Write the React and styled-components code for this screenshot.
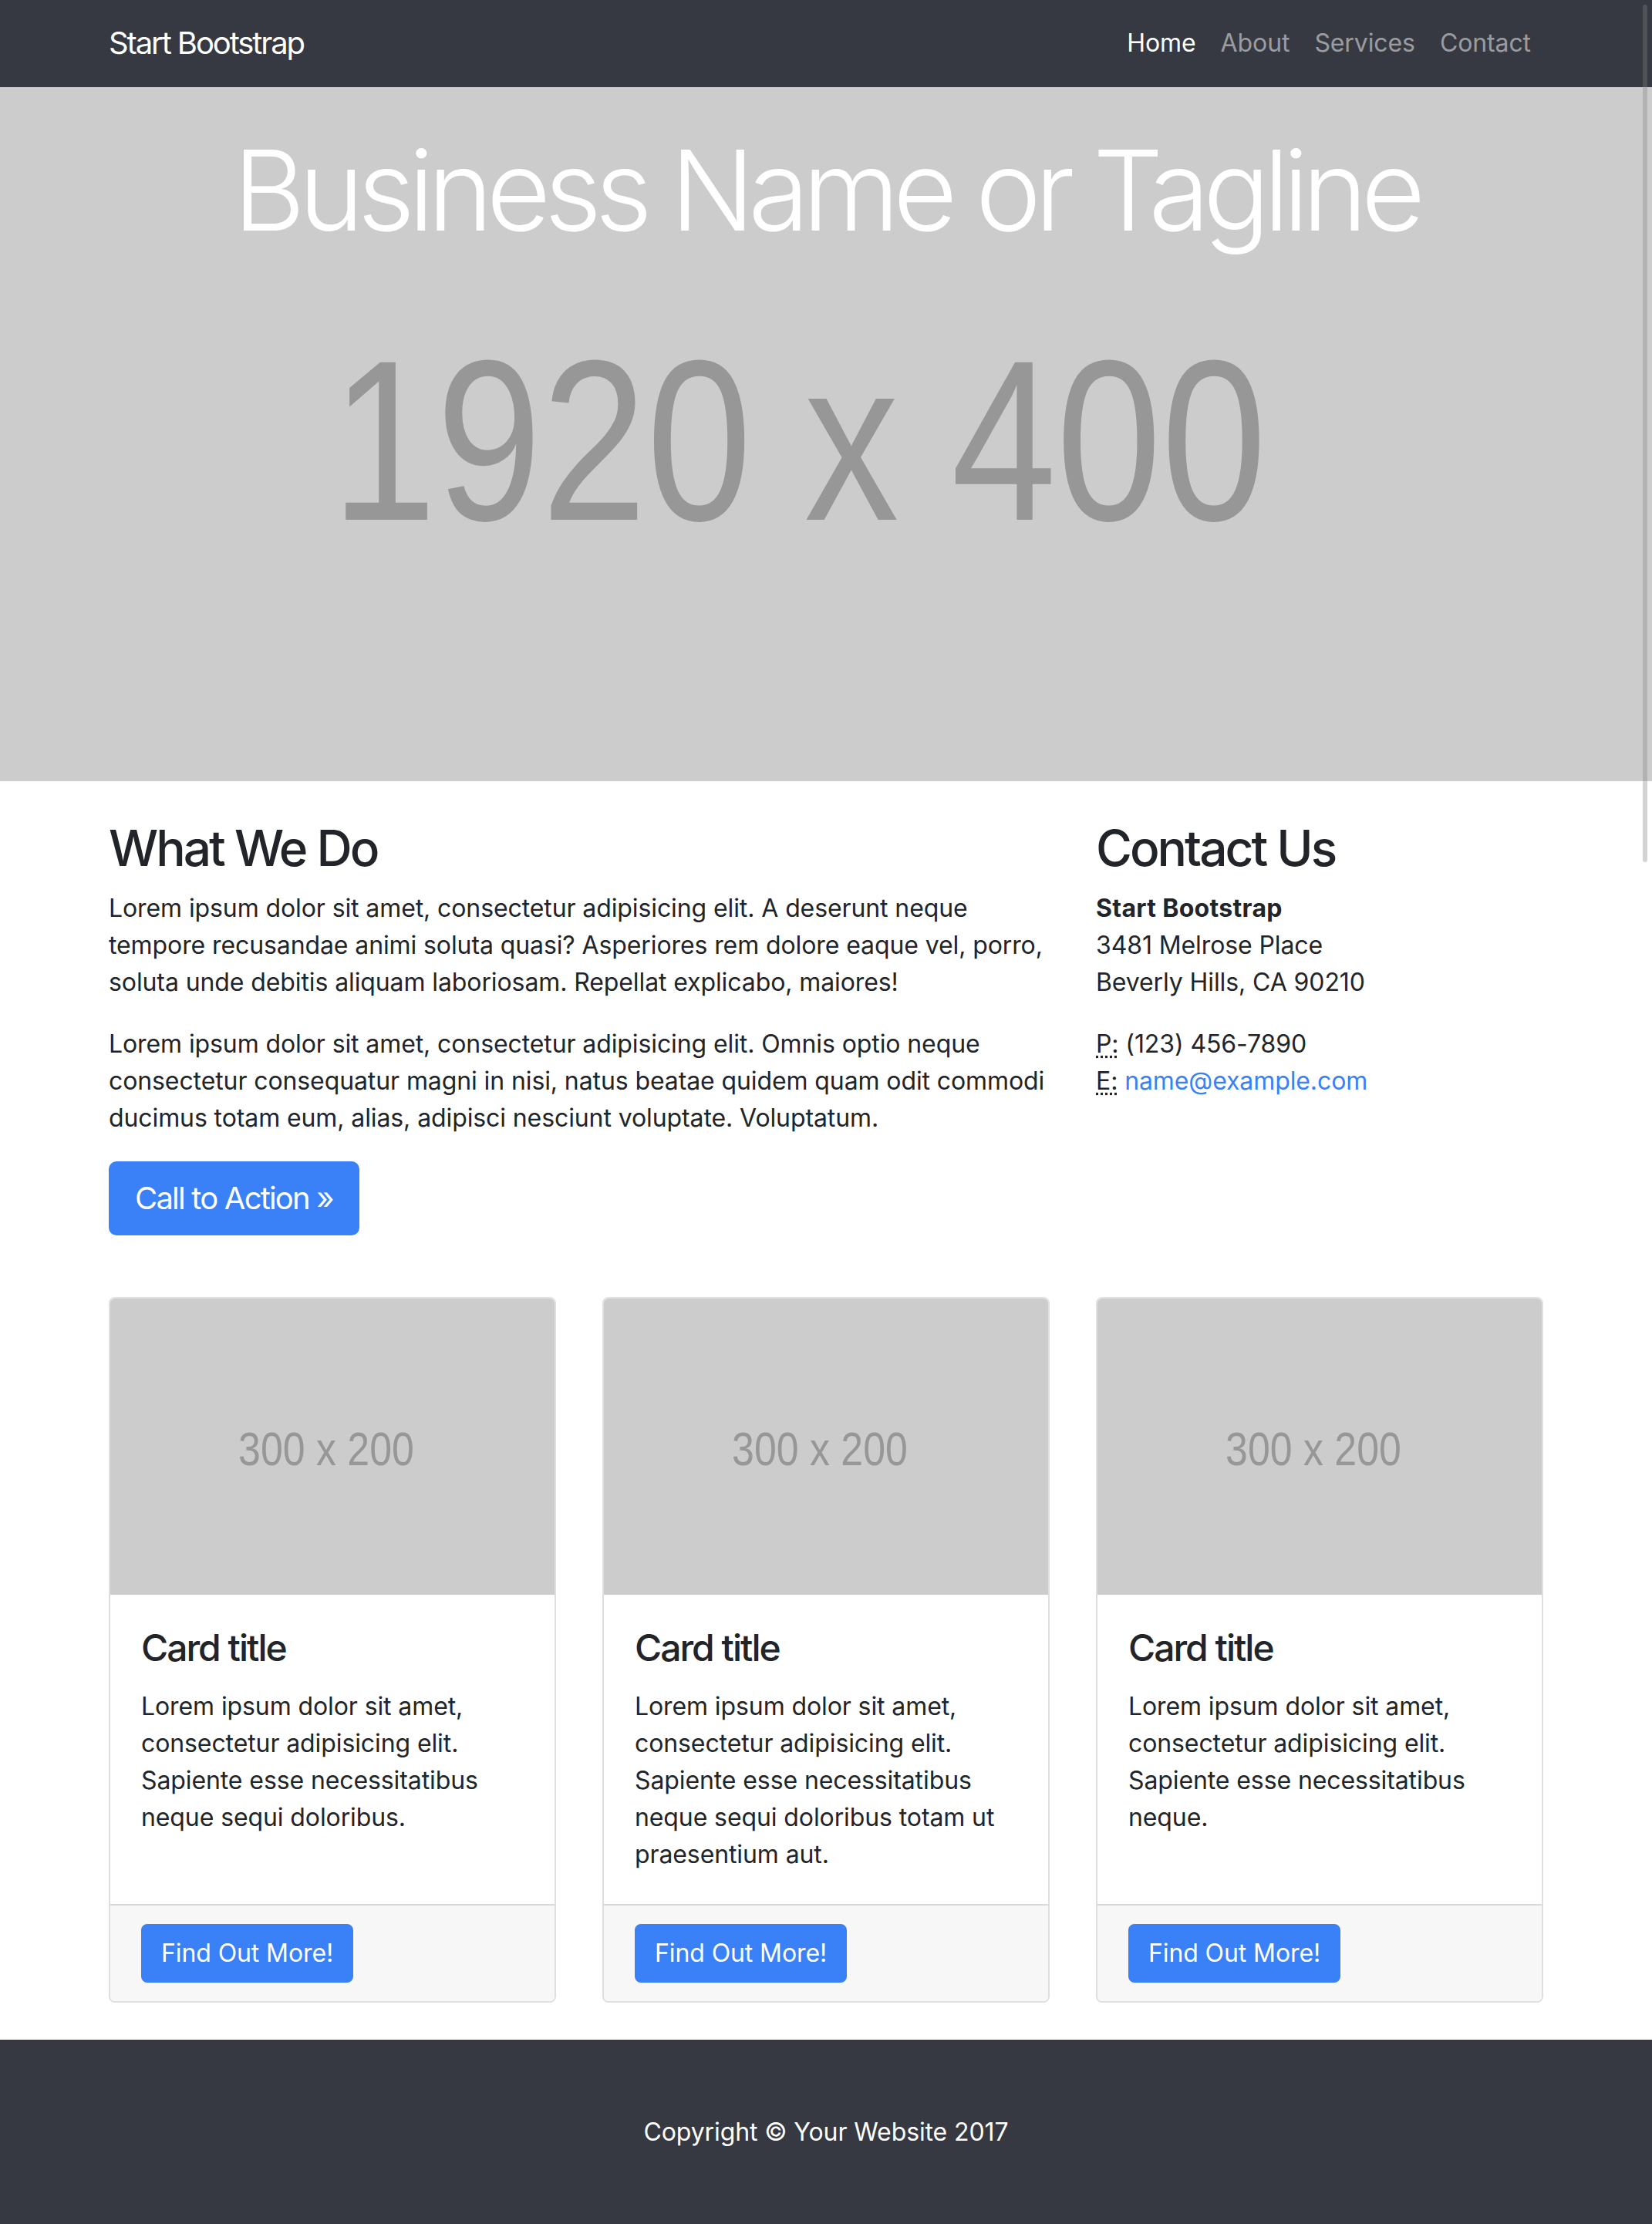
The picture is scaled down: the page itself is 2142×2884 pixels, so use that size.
import React from 'react'
import styled, { createGlobalStyle } from 'styled-components'

const GlobalStyle = createGlobalStyle`
  html, body {
    margin: 0;
    padding: 0;
    overflow: hidden;
  }
  body {
    font-family: Inter, "Noto Sans", "Liberation Sans", sans-serif;
    font-size: 32px;
    line-height: 1.5;
    letter-spacing: -0.1px;
    color: #212529;
    background: #fff;
    -webkit-font-smoothing: antialiased;
  }
  * {
    box-sizing: border-box;
  }
`

const Container = styled.div`
  width: 1920px;
  margin: 0 auto;
  padding: 0 30px;
`

const Row = styled.div`
  display: flex;
  margin: 0 -30px;
`

const Col = styled.div`
  flex: 0 0 ${(p) => p.$span}%;
  max-width: ${(p) => p.$span}%;
  padding: 0 30px;
`

// navigation
const Navbar = styled.nav`
  background: #363941;
  padding: 16px 0 17px;
`

const NavInner = styled(Container)`
  display: flex;
  align-items: center;
  justify-content: space-between;
`

const Brand = styled.a`
  color: #fff;
  font-size: 40px;
  line-height: 60px;
  padding: 10px 0;
  text-decoration: none;
  letter-spacing: -2.1px;
`

const NavList = styled.ul`
  display: flex;
  list-style: none;
  margin: 0;
  padding: 0;
`

const NavLink = styled.a`
  display: block;
  padding: 16px;
  font-size: 32px;
  line-height: 48px;
  text-decoration: none;
  color: ${(p) => (p.$active ? '#fff' : 'rgba(255, 255, 255, 0.5)')};
`

// header
const Header = styled.header`
  height: 900px;
  background: #cccccc;
  display: grid;
  overflow: hidden;
`

const Tagline = styled.h1`
  grid-area: 1 / 1;
  align-self: start;
  margin: 48px 0 0;
  text-align: center;
  color: #fff;
  font-size: 144px;
  font-weight: 300;
  line-height: 1.2;
  letter-spacing: -8.5px;
  position: relative;
`

const HeaderPlaceholder = styled.div`
  grid-area: 1 / 1;
  align-self: center;
  justify-self: center;
  margin: 16px 70px 0 0;
  font-family: "Liberation Sans", Arial, sans-serif;
  font-size: 297px;
  line-height: 1;
  letter-spacing: 0;
  color: #979797;
  white-space: nowrap;
  transform: scaleX(0.825);
`

// content
const Heading = styled.h2`
  margin: 48px 0 16px;
  font-size: 64px;
  font-weight: 500;
  line-height: 77px;
  letter-spacing: -3px;
`

const Text = styled.p`
  margin: 0 0 32px;
`

const Address = styled.address`
  font-style: normal;
  margin: 0 0 32px;

  strong {
    letter-spacing: 0.3px;
  }
`

const Abbr = styled.abbr`
  text-decoration: underline dotted;
  text-underline-offset: 4px;
  cursor: help;
`

const Link = styled.a`
  color: #3a80f6;
  text-decoration: none;
`

const ButtonRow = styled.div`
  display: flex;
  margin-bottom: 32px;
`

const Button = styled.a`
  display: inline-block;
  background: #3a80f6;
  border: 2px solid #3a80f6;
  color: #fff;
  text-decoration: none;
  font-size: ${(p) => (p.$large ? 40 : 32)}px;
  line-height: ${(p) => (p.$large ? 60 : 48)}px;
  letter-spacing: ${(p) => (p.$large ? '-1.8px' : '-0.1px')};
  padding: ${(p) => (p.$large ? '16px 32px' : '12px 24px')};
  border-radius: ${(p) => (p.$large ? 10 : 8)}px;
`

// cards
const CardCol = styled(Col)`
  margin: 48px 0;
`

const Card = styled.div`
  height: 100%;
  display: flex;
  flex-direction: column;
  border: 2px solid rgba(0, 0, 0, 0.125);
  border-radius: 8px;
  overflow: hidden;
`

const CardImage = styled.div`
  height: 384px;
  background: #cccccc;
  display: flex;
  align-items: center;
  justify-content: center;
  padding: 8px 16px 0 0;
  font-family: "Liberation Sans", Arial, sans-serif;
  font-size: 61px;
  letter-spacing: 0;
  color: #979797;
  white-space: nowrap;

  span {
    display: inline-block;
    transform: scaleX(0.85);
  }
`

const CardBody = styled.div`
  flex: 1 1 auto;
  padding: 40px;
`

const CardTitle = styled.h4`
  margin: 0 0 24px;
  font-size: 48px;
  font-weight: 500;
  line-height: 57px;
  letter-spacing: -2px;
`

const CardText = styled.p`
  margin: 0;
`

const CardFooter = styled.div`
  padding: 24px 40px;
  background: #f7f7f7;
  border-top: 2px solid rgba(0, 0, 0, 0.125);
`

const Footer = styled.footer`
  background: #363941;
  padding: 96px 0;
`

const FooterText = styled.p`
  margin: 0;
  text-align: center;
  color: #fff;
`

const ScrollThumb = styled.div`
  position: fixed;
  top: 6px;
  right: 6px;
  width: 6px;
  height: 1112px;
  border-radius: 3px;
  background: rgba(128, 128, 128, 0.35);
`

const cards = [
  'Lorem ipsum dolor sit amet, consectetur adipisicing elit. Sapiente esse necessitatibus neque sequi doloribus.',
  'Lorem ipsum dolor sit amet, consectetur adipisicing elit. Sapiente esse necessitatibus neque sequi doloribus totam ut praesentium aut.',
  'Lorem ipsum dolor sit amet, consectetur adipisicing elit. Sapiente esse necessitatibus neque.',
]

const links = ['Home', 'About', 'Services', 'Contact']

export default function App() {
  return (
    <>
      <GlobalStyle />
      <Navbar>
        <NavInner>
          <Brand href="#">Start Bootstrap</Brand>
          <NavList>
            {links.map((l, i) => (
              <li key={l}>
                <NavLink href="#" $active={i === 0}>
                  {l}
                </NavLink>
              </li>
            ))}
          </NavList>
        </NavInner>
      </Navbar>

      <Header>
        <HeaderPlaceholder>1920 x 400</HeaderPlaceholder>
        <Tagline>Business Name or Tagline</Tagline>
      </Header>

      <Container>
        <Row>
          <Col $span={66.6667}>
            <Heading>What We Do</Heading>
            <Text>
              Lorem ipsum dolor sit amet, consectetur adipisicing elit. A deserunt neque tempore
              recusandae animi soluta quasi? Asperiores rem dolore eaque vel, porro, soluta unde
              debitis aliquam laboriosam. Repellat explicabo, maiores!
            </Text>
            <Text>
              Lorem ipsum dolor sit amet, consectetur adipisicing elit. Omnis optio neque
              consectetur consequatur magni in nisi, natus beatae quidem quam odit commodi ducimus
              totam eum, alias, adipisci nesciunt voluptate. Voluptatum.
            </Text>
            <ButtonRow>
              <Button href="#" $large>
                Call to Action &raquo;
              </Button>
            </ButtonRow>
          </Col>
          <Col $span={33.3333}>
            <Heading>Contact Us</Heading>
            <Address>
              <strong>Start Bootstrap</strong>
              <br />
              3481 Melrose Place
              <br />
              Beverly Hills, CA 90210
            </Address>
            <Address>
              <Abbr title="Phone">P:</Abbr> (123) 456-7890
              <br />
              <Abbr title="Email">E:</Abbr> <Link href="#">name@example.com</Link>
            </Address>
          </Col>
        </Row>

        <Row>
          {cards.map((text, i) => (
            <CardCol $span={33.3333} key={i}>
              <Card>
                <CardImage>
                  <span>300 x 200</span>
                </CardImage>
                <CardBody>
                  <CardTitle>Card title</CardTitle>
                  <CardText>{text}</CardText>
                </CardBody>
                <CardFooter>
                  <Button href="#">Find Out More!</Button>
                </CardFooter>
              </Card>
            </CardCol>
          ))}
        </Row>
      </Container>

      <Footer>
        <FooterText>Copyright &copy; Your Website 2017</FooterText>
      </Footer>
      <ScrollThumb />
    </>
  )
}
